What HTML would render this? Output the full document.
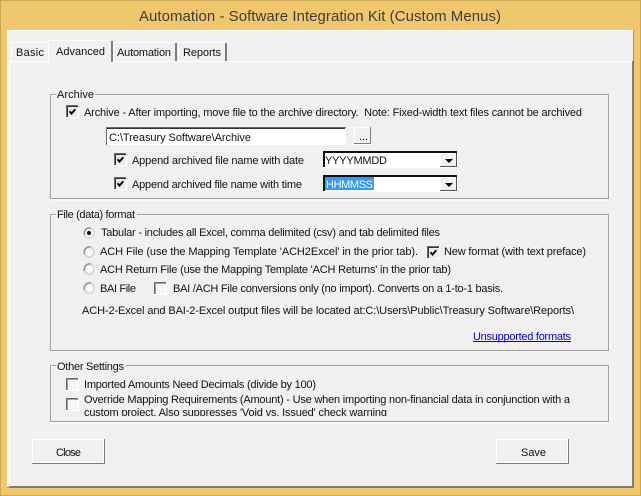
<!DOCTYPE html>
<html><head><meta charset="utf-8"><style>
html,body{margin:0;padding:0;background:#f0c76c}
svg{display:block;position:absolute;left:0;top:0}
text{font-family:"Liberation Sans",sans-serif;font-size:11px;fill:#111;white-space:pre}
</style></head><body>
<svg width="641" height="496" viewBox="0 0 641 496" xmlns="http://www.w3.org/2000/svg" shape-rendering="crispEdges">
<defs>
<g id="cb"><rect x="0" y="0" width="13" height="13" fill="#fff"/><rect x="0" y="0" width="12" height="12" fill="#696969"/><rect x="1" y="1" width="11" height="11" fill="#a0a0a0"/><rect x="2" y="2" width="10" height="10" fill="#f7f7f7"/></g>
<g id="cc"><rect x="0" y="0" width="13" height="13" fill="#fff"/><rect x="0" y="0" width="12" height="12" fill="#696969"/><rect x="1" y="1" width="11" height="11" fill="#333"/><rect x="2" y="2" width="10" height="10" fill="#ececec"/><path d="M3.5 6.2 L5.5 8.6 L9.3 4.2" fill="none" stroke="#000" stroke-width="1.9" shape-rendering="auto"/></g>
<g id="rd" shape-rendering="auto"><circle cx="6" cy="6" r="6" fill="#d8d8d8"/><path d="M1.5 8 A5.5 5.5 0 0 1 8 1" fill="none" stroke="#8a8a8a" stroke-width="1.2"/><circle cx="6.3" cy="6.3" r="3.9" fill="#fafafa"/></g>
<g id="dd"><rect x="0" y="0" width="17" height="14" fill="#f0f0f0"/><rect x="16" y="0" width="1" height="14" fill="#555"/><rect x="0" y="13" width="17" height="1" fill="#555"/><rect x="0" y="0" width="1" height="13" fill="#fff"/><rect x="0" y="0" width="16" height="1" fill="#fff"/><path d="M5 6 H13 L9 10 Z" fill="#000" shape-rendering="auto"/></g>
</defs>

<rect width="641" height="496" fill="#f0c76c"/>
<rect x="0.5" y="0.5" width="640" height="495" fill="none" stroke="#c9a654"/>
<text x="139" y="21" textLength="362" style="font-size:15px;fill:#3d3d3d" shape-rendering="auto">Automation - Software Integration Kit (Custom Menus)</text>

<!-- window client -->
<rect x="7" y="30" width="627" height="458" fill="#a9945c"/>
<rect x="7" y="30" width="626" height="457" fill="#fff"/>
<rect x="8" y="31" width="625" height="456" fill="#f0f0f0"/>

<!-- tab page -->
<rect x="9" y="61" width="624" height="427" fill="#fff"/>
<rect x="10" y="62" width="622" height="424" fill="#f0f0f0"/>
<rect x="632" y="61" width="2" height="427" fill="#7d7d7d"/>
<rect x="9" y="486" width="625" height="2" fill="#7d7d7d"/>

<!-- tabs -->
<rect x="11" y="42" width="37" height="19" fill="#fff"/><rect x="12" y="43" width="36" height="18" fill="#f0f0f0"/>
<rect x="113" y="42" width="64" height="19" fill="#fff"/><rect x="114" y="43" width="61" height="18" fill="#f0f0f0"/><rect x="175" y="43" width="2" height="18" fill="#7d7d7d"/>
<rect x="178" y="42" width="49" height="19" fill="#fff"/><rect x="179" y="43" width="46" height="18" fill="#f0f0f0"/><rect x="225" y="43" width="2" height="18" fill="#7d7d7d"/>
<rect x="48" y="40" width="65" height="23" fill="#fff"/><rect x="49" y="41" width="62" height="22" fill="#f0f0f0"/><rect x="111" y="41" width="2" height="21" fill="#7d7d7d"/>
<text x="16" y="56" textLength="28">Basic</text>
<text x="56" y="55" textLength="49">Advanced</text>
<text x="117" y="56" textLength="54">Automation</text>
<text x="183" y="56" textLength="38">Reports</text>

<!-- groups -->
<rect x="51" y="95" width="559" height="105" fill="none" stroke="#fff"/>
<rect x="50.5" y="94.5" width="558" height="104" fill="none" stroke="#a0a0a0"/>
<rect x="51" y="215" width="559" height="136" fill="none" stroke="#fff"/>
<rect x="50.5" y="214.5" width="558" height="136" fill="none" stroke="#a0a0a0"/>
<rect x="51" y="366" width="559" height="57" fill="none" stroke="#fff"/>
<rect x="50.5" y="365.5" width="558" height="56" fill="none" stroke="#a0a0a0"/>

<rect x="56" y="88" width="39" height="12" fill="#f0f0f0"/>
<text x="57" y="98" textLength="37">Archive</text>
<rect x="56" y="208" width="81" height="12" fill="#f0f0f0"/>
<text x="57" y="218" textLength="78">File (data) format</text>
<rect x="56" y="359" width="70" height="12" fill="#f0f0f0"/>
<text x="57" y="370" textLength="67">Other Settings</text>

<!-- Archive -->
<use href="#cc" x="66" y="105"/>
<text x="84" y="116" textLength="498">Archive - After importing, move file to the archive directory.  Note: Fixed-width text files cannot be archived</text>

<rect x="106" y="127" width="241" height="19" fill="#f0f0f0"/>
<rect x="106" y="127" width="240" height="18" fill="#fff"/>
<rect x="106" y="127" width="240" height="1" fill="#696969"/>
<rect x="106" y="127" width="1" height="18" fill="#696969"/>
<rect x="107" y="128" width="238" height="1" fill="#333"/>
<text x="109" y="141" textLength="142">C:\Treasury Software\Archive</text>

<rect x="354" y="127" width="17" height="18" fill="#fff"/>
<rect x="355" y="128" width="15" height="15" fill="#f0f0f0"/>
<rect x="370" y="127" width="1" height="17" fill="#7d7d7d"/>
<rect x="354" y="143" width="17" height="1" fill="#7d7d7d"/>
<text x="359" y="140">...</text>

<use href="#cc" x="114" y="153"/>
<text x="132" y="164" textLength="172">Append archived file name with date</text>
<use href="#cc" x="114" y="177"/>
<text x="132" y="188" textLength="170">Append archived file name with time</text>

<rect x="323" y="151" width="135" height="17" fill="#fff"/>
<rect x="323" y="151" width="134" height="16" fill="#111"/>
<rect x="325" y="153" width="132" height="14" fill="#fff"/>
<use href="#dd" x="440" y="153"/>
<text x="325" y="164" textLength="62">YYYYMMDD</text>

<rect x="323" y="175" width="135" height="17" fill="#fff"/>
<rect x="323" y="175" width="134" height="16" fill="#111"/>
<rect x="325" y="177" width="132" height="14" fill="#fff"/>
<rect x="325" y="177" width="49" height="13" fill="#3399ff"/>
<use href="#dd" x="440" y="177"/>
<text x="326" y="188" textLength="47" style="fill:#fff">HHMMSS</text>

<!-- File format -->
<use href="#rd" x="83" y="227"/><circle cx="89" cy="233" r="2" fill="#000" shape-rendering="auto"/>
<text x="101" y="236" textLength="339">Tabular - includes all Excel, comma delimited (csv) and tab delimited files</text>
<use href="#rd" x="83" y="246"/>
<text x="100" y="255" textLength="318">ACH File (use the Mapping Template 'ACH2Excel' in the prior tab).</text>
<use href="#cc" x="427" y="246"/>
<text x="444" y="255" textLength="142">New format (with text preface)</text>
<use href="#rd" x="83" y="263"/>
<text x="100" y="273" textLength="351">ACH Return File (use the Mapping Template 'ACH Returns' in the prior tab)</text>
<use href="#rd" x="83" y="282"/>
<text x="100" y="292" textLength="36">BAI File</text>
<use href="#cb" x="154" y="282"/>
<text x="173" y="292" textLength="330">BAI /ACH File conversions only (no import). Converts on a 1-to-1 basis.</text>
<text x="82" y="314" textLength="492">ACH-2-Excel and BAI-2-Excel output files will be located at:C:\Users\Public\Treasury Software\Reports\</text>
<text x="473" y="340" textLength="98" style="fill:#0000e0">Unsupported formats</text>
<rect x="473" y="341" width="98" height="1" fill="#0000e0"/>

<!-- Other -->
<use href="#cb" x="66" y="378"/>
<text x="84" y="388" textLength="232">Imported Amounts Need Decimals (divide by 100)</text>
<use href="#cb" x="66" y="398"/>
<text x="84" y="403" textLength="486">Override Mapping Requirements (Amount) - Use when importing non-financial data in conjunction with a</text>
<text x="84" y="416" textLength="303">custom project. Also suppresses 'Void vs. Issued' check warning</text>
<rect x="84" y="416" width="310" height="4" fill="#f0f0f0"/>

<!-- Buttons -->
<rect x="32" y="439" width="73" height="25" fill="#7d7d7d"/>
<rect x="32" y="439" width="72" height="24" fill="#fff"/>
<rect x="33" y="440" width="70" height="22" fill="#f0f0f0"/>
<rect x="104" y="439" width="1" height="25" fill="#7d7d7d"/>
<rect x="32" y="463" width="73" height="1" fill="#7d7d7d"/>
<text x="56" y="456" textLength="25">Close</text>

<rect x="496" y="439" width="73" height="25" fill="#7d7d7d"/>
<rect x="496" y="439" width="72" height="24" fill="#fff"/>
<rect x="497" y="440" width="70" height="22" fill="#f0f0f0"/>
<text x="521" y="456" textLength="25">Save</text>
</svg>
</body></html>
